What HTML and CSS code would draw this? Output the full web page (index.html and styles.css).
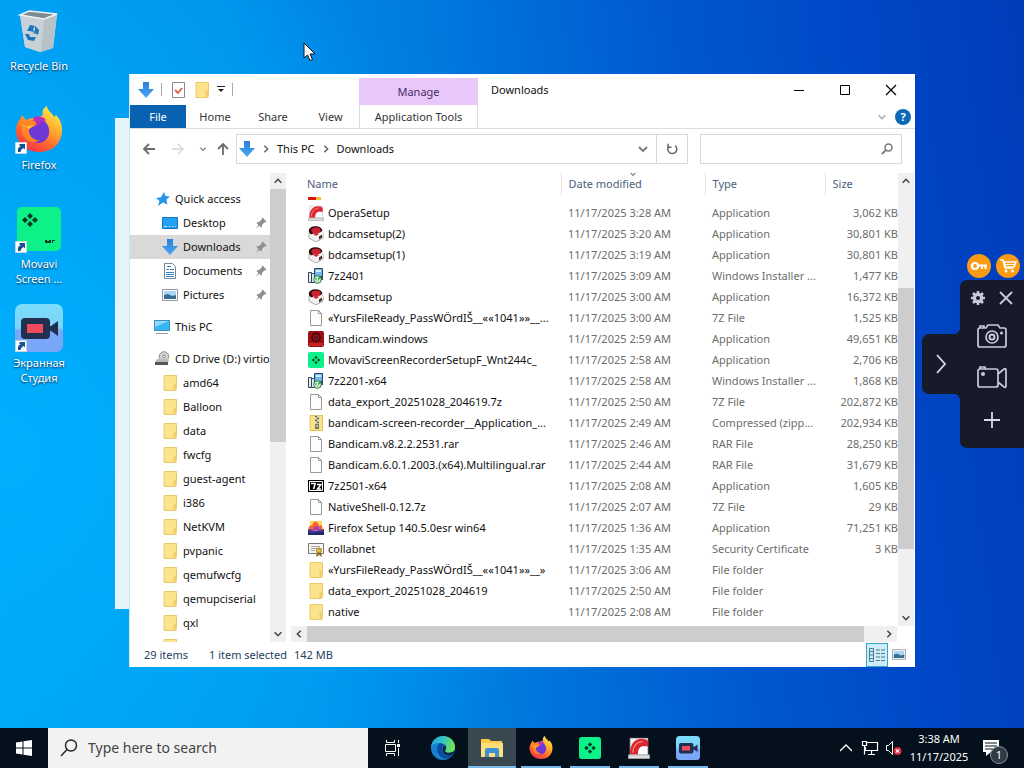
FILE: index.html
```html
<!DOCTYPE html>
<html lang="en">
<head>
<meta charset="utf-8">
<title>Downloads</title>
<link rel="stylesheet" href="styles.css">
</head>
<body>
<svg class="sprite" aria-hidden="true">
  <defs>
    <linearGradient id="gFlame" x1="0.8" y1="0" x2="0.2" y2="1"><stop offset="0" stop-color="#fff04a"/><stop offset=".35" stop-color="#ffb02e"/><stop offset=".65" stop-color="#ff6a2e"/><stop offset="1" stop-color="#f5294e"/></linearGradient>
    <linearGradient id="gSky" x1="0" y1="0" x2="0" y2="1"><stop offset="0" stop-color="#7cdcfc"/><stop offset=".5" stop-color="#7cd4fa"/><stop offset=".55" stop-color="#78a8fa"/><stop offset="1" stop-color="#7ba6f8"/></linearGradient>
    <linearGradient id="gEdge" x1="0" y1="0" x2="1" y2="0.2"><stop offset="0" stop-color="#1f9de0"/><stop offset=".5" stop-color="#35c1c8"/><stop offset="1" stop-color="#6fe35a"/></linearGradient>
    <linearGradient id="gDown" x1="0" y1="0" x2="0" y2="1"><stop offset="0" stop-color="#2a80d4"/><stop offset="1" stop-color="#49a8f4"/></linearGradient>
  </defs>
  <symbol id="down" viewBox="0 0 16 16"><path d="M5 0h6v7h5l-8 9-8-9h5z" fill="url(#gDown)"/></symbol>
  <symbol id="folder" viewBox="0 0 16 16"><path d="M2 0.500h12.500v11l-1 4H2z" fill="#fce48d" stroke="#ecc965"/><path d="M11.500 8.500h3v7h-3z" fill="#f3cf69"/></symbol>
  <symbol id="file" viewBox="0 0 16 16"><path d="M2.500.5h8l3 3v12h-11z" fill="#fdfdfd" stroke="#9a9a9a"/><path d="M10.500.5v3h3" fill="none" stroke="#9a9a9a"/></symbol>
  <symbol id="zip" viewBox="0 0 16 16"><path d="M2 0.500h12.500v15H2z" fill="#fbe08a" stroke="#e6c25c"/><path d="M7 0h4v11H7z" fill="#d9d5b5"/><path d="M7 1.500h2m0 2h2m-4 2h2m0 2h2" stroke="#5b6660" stroke-width="1.300"/><rect x="7" y="9" width="4" height="5" fill="#777c62"/><path d="M8.500 10h1v2h-1z" fill="#fff"/></symbol>
  <symbol id="msi" viewBox="0 0 16 16"><path d="M6.500.5h8v8h-8z" fill="#6fb7ee" stroke="#2c4260"/><path d="M8 2h5v2H8z" fill="#d5edfb"/><path d="M.5 4.500h3v10h-3zM3.500 5.500h3v9h-3z" fill="#e3eaf2" stroke="#34455c"/><path d="M15 1v11h-3V9h2z" fill="#324a6c"/><circle cx="9.500" cy="11.500" r="3.800" fill="#c9efcd" stroke="#287a3c"/><path d="M7.500 10.500l2 2 3-4" fill="none" stroke="#24a23d" stroke-width="1.400"/><circle cx="9.500" cy="11.800" r="1" fill="#fff"/></symbol>
  <symbol id="bdsetup" viewBox="0 0 16 16"><path d="M1 7l7-2 7 2v5l-7 4-7-4z" fill="#f1f1f1" stroke="#a9a9a9"/><ellipse cx="7.500" cy="4.800" rx="6.800" ry="4.600" fill="#2b0b0d"/><ellipse cx="8" cy="4.500" rx="4.600" ry="3" fill="#cf2230"/><path d="M6 7c3 1 6 0 8-2l1 4-6 3-6-3z" fill="#f8f8f8"/><path d="M5 8l3-2 3 2-3 2z" fill="#d92634"/><path d="M11 10.500l3-2v3l-3 2z" fill="#4d2a2a"/></symbol>
  <symbol id="bandicam" viewBox="0 0 16 16"><rect width="16" height="16" rx="2" fill="#9c1015"/><rect x="1" y="12" width="14" height="3" fill="#c92020"/><circle cx="8" cy="6.500" r="4" fill="#9a161b" stroke="#3c0507" stroke-width="1.500"/><circle cx="8" cy="6.500" r="1.500" fill="none" stroke="#40070a"/></symbol>
  <symbol id="movavi" viewBox="0 0 16 16"><rect width="16" height="16" rx="2" fill="#0df288"/><path d="M8 3.800l1.600 1.600L8 7 6.400 5.400zM5.400 6.400L7 8 5.400 9.600 3.800 8zM10.600 6.400L12.200 8l-1.600 1.600L9 8zM8 9l1.600 1.600L8 12.200l-1.600-1.600z" fill="#073b27"/></symbol>
  <symbol id="sevenzip" viewBox="0 0 16 16"><path d="M0 2h16v12H0z"/><path d="M1.500 3.500h13v9h-13z" fill="none" stroke="#fff"/><path d="M3 5.500h4v1L5.500 11M9 6.500h4L9.500 11H13" fill="none" stroke="#fff" stroke-width="1.500"/></symbol>
  <symbol id="ffsetup" viewBox="0 0 16 16"><path d="M2 1h12v9H2z" fill="#ffd95c"/><path d="M1 10c-1-3 1-4 2-5l1 1c0-2 2-4 4-5 1 2 3 2 3 5l2-1c2 2 2 4 1 6z" fill="#f7652f"/><path d="M5 10c0-3 2-4 4-4s3 2 2 5z" fill="#a63dbb"/><path d="M0 9l4 1 4 1 4-1 4-1v6H0z" fill="#4a3590"/><path d="M0 12l5 1 6-1 5 0v3H0z" fill="#22266a"/></symbol>
  <symbol id="cert" viewBox="0 0 16 16"><path d="M.5 2.500h15v10H.5z" fill="#f6f6ee" stroke="#777"/><path d="M3 5.500h9M3 7.500h6M3 9.500h4" stroke="#aaa"/><path d="M9 11l-1 5 3-2 3 2-1-5" fill="#8b6e22"/><circle cx="11" cy="9.500" r="2.500" fill="#e5b948" stroke="#a37c21"/></symbol>
  <symbol id="opera" viewBox="0 0 24 24"><path d="M2.500 1.500h19v18h-19z" fill="#f7f7f7" stroke="#c9c9c9"/><path d="M2 19C2 8 7 2 15 2c4 0 6 1 7 3v5h-4c-5 0-7 3-7 9z" fill="#dd2630"/><path d="M11 19c0-6 2-9 6-9 3 0 4 2 4 5v4z" fill="#fff"/><path d="M5 17C6 9 9 5 16 5" fill="none" stroke="#f58a8a" stroke-width="1.300"/><path d="M.5 19.500h23v4H.5z" fill="#dedede" stroke="#a4a4a4"/></symbol>
  <symbol id="firefox" viewBox="0 0 48 48"><path d="M24 46C10 46 1 36 1 24c0-5 2-9 5-12l1-3 4 5 6-2 7-1 4-2c-1-4 0-7 4-9 0 5 5 6 7 11l2-2c5 5 6 10 6 15 0 13-9 22-23 22z" fill="url(#gFlame)"/><path d="M13 17c6-5 15-5 19 1 5 8 1 18-8 19-8 0-14-7-11-20z" fill="#6e37d8"/><path d="M18 12c5-3 12-1 13 3-6-1-5 4-10 5z" fill="#b82fbd"/><path d="M5 12c2 3 7 2 11 2 4 0 6 3 5 5l-7 4c-1 7 5 12 11 11-7 5-17 0-18-9z" fill="#ff8624"/><path d="M4 17l5 4 10-2-5 4z" fill="#ffc43c"/></symbol>
  <symbol id="studio" viewBox="0 0 48 48"><rect width="48" height="48" rx="7" fill="url(#gSky)"/><rect x="6" y="14" width="29" height="21" rx="4" fill="#22304f"/><path d="M33 22h3l7-5v15l-7-5h-3z" fill="#22304f"/><path d="M12 20h16v9H12z" fill="#f04c5d"/></symbol>
  <symbol id="shortcut" viewBox="0 0 12 12"><path d="M.5.5h11v11H.5z" fill="#fff" stroke="#c5d6e2"/><path d="M3 10V7q0-2 3-3H4.500V2H10v5.500L8.500 6Q6 7 5.500 10z" fill="#17548f"/></symbol>
  <symbol id="pin" viewBox="0 0 12 12"><path d="M7.500.5l4 4-1 1-1-.2L7 8l-.3 2L6 10.500 1.500 6l.7-.7L4 5l2.700-2.500-.2-1zM3.500 7.500l1 1L1 11.500z" fill="#8b9095"/></symbol>
  <symbol id="left" viewBox="0 0 12 12"><path d="M8 2L4 6l4 4" fill="none" stroke="currentColor" stroke-width="1.800"/></symbol>
  <symbol id="right" viewBox="0 0 12 12"><path d="M4 2l4 4-4 4" fill="none" stroke="currentColor" stroke-width="1.800"/></symbol>
  <symbol id="up" viewBox="0 0 12 12"><path d="M2 8l4-4 4 4" fill="none" stroke="currentColor" stroke-width="1.800"/></symbol>
  <symbol id="dn" viewBox="0 0 12 12"><path d="M2 4l4 4 4-4" fill="none" stroke="currentColor" stroke-width="1.800"/></symbol>
  <symbol id="picture" viewBox="0 0 16 12"><path d="M.5.5h15v11H.5z" fill="#fff" stroke="#919aa3"/><path d="M2 2h12v8H2z" fill="#a8d5f5"/><path d="M2 6l4-1 4 2 4-1v4H2z" fill="#376d8f"/></symbol>
</svg>

<main class="desktop">
  <nav class="shortcuts" aria-label="Desktop icons">
    <a class="shortcut" href="#"><span class="shortcut-icon"><svg width="48" height="48" viewBox="0 0 48 48"><path d="M5 8l9-4 28 3-4 34-13 4-15-5z" fill="#d7dde1"/><path d="M5 8l24 4-3 33-16-5z" fill="#c9d1d6"/><path d="M29 12l13-5-4 34-12 4z" fill="#b6c1c8"/><path d="M5 8l9-4 28 3-13 5z" fill="#7d8c93" stroke="#edf2f4" stroke-width="1.500"/><path d="M12 24l3-6 5 1-2 3 1 3-4-1zM20 19l4 4-1 5-3-2-2 1 2-4zM10 27l4 0 1 3 6 0-2 4-6-1z" fill="#1777bd"/></svg></span><span>Recycle Bin</span></a>
    <a class="shortcut" href="#"><span class="shortcut-icon"><svg width="48" height="48"><use href="#firefox"/></svg><svg class="badge" width="12" height="12"><use href="#shortcut"/></svg></span><span>Firefox</span></a>
    <a class="shortcut" href="#"><span class="shortcut-icon"><svg width="48" height="48" viewBox="0 0 48 48"><rect x="2" y="2" width="44" height="44" rx="5" fill="#0df288"/><path d="M15 8l3 3-3 3-3-3zM10 12l3 3-3 3-3-3zM20 12l3 3-3 3-3-3zM15 16l3 3-3 3-3-3z" fill="#073b27"/><path d="M30 35h2v3h-2zM32 36h2v2h-2zM34 35h2v3h-2zM37 35h1v3h-1zM38 35h2v1h-2z" fill="#073b27"/></svg><svg class="badge" width="12" height="12"><use href="#shortcut"/></svg></span><span>Movavi<br>Screen ...</span></a>
    <a class="shortcut" href="#"><span class="shortcut-icon"><svg width="48" height="48"><use href="#studio"/></svg><svg class="badge" width="12" height="12"><use href="#shortcut"/></svg></span><span>Экранная<br>Студия</span></a>
  </nav>

  <div class="back-window"></div>

  <section class="window" aria-label="Downloads">
    <header class="titlebar">
      <div class="quick">
        <svg width="16" height="16"><use href="#down"/></svg><i class="bar"></i>
        <svg width="18" height="16" viewBox="0 0 18 16"><path d="M3.500.5h12v15h-12z" fill="#fff" stroke="#8b8b8b"/><path d="M6 8l3 3 4-5" fill="none" stroke="#df5a43" stroke-width="1.800"/></svg>
        <svg width="16" height="16"><use href="#folder"/></svg>
        <svg width="8" height="8" viewBox="0 0 8 8"><path d="M0 .5h8" stroke="#222"/><path d="M1 3h6L4 6z" fill="#222"/></svg><i class="bar"></i>
      </div>
      <button class="manage">Manage</button>
      <h1 class="title">Downloads</h1>
      <div class="controls">
        <button aria-label="Minimize"><svg width="12" height="12"><path d="M1 6.500h10" stroke="#000"/></svg></button>
        <button aria-label="Maximize"><svg width="12" height="12"><path d="M1.500 1.500h9v9h-9z" fill="none" stroke="#000"/></svg></button>
        <button aria-label="Close"><svg width="12" height="12"><path d="M1 1l10 10M11 1L1 11" stroke="#000" stroke-width="1.200"/></svg></button>
      </div>
    </header>
    <div class="ribbon">
      <button class="file-tab">File</button><button class="tab">Home</button><button class="tab">Share</button><button class="tab last">View</button><button class="tools-tab">Application Tools</button>
      <div class="ribbon-end"><svg width="10" height="10" color="#aaa"><use href="#dn"/></svg><button class="help" aria-label="Help">?</button></div>
    </div>
    <div class="address-row">
      <div class="history">
        <button aria-label="Back"><svg width="14" height="14" viewBox="0 0 14 14"><path d="M13 7H2M7 2L2 7l5 5" fill="none" stroke="#6b6b6b" stroke-width="1.800"/></svg></button>
        <button aria-label="Forward"><svg width="14" height="14" viewBox="0 0 14 14"><path d="M1 7h11M7 2l5 5-5 5" fill="none" stroke="#d4d4d4" stroke-width="1.300"/></svg></button>
        <button class="narrow" aria-label="Recent"><svg width="8" height="8" color="#777"><use href="#dn"/></svg></button>
        <button class="upward" aria-label="Up"><svg width="14" height="14" viewBox="0 0 14 14"><path d="M7 13V2M2 7l5-5 5 5" fill="none" stroke="#6b6b6b" stroke-width="1.800"/></svg></button>
      </div>
      <div class="path">
        <svg width="16" height="16"><use href="#down"/></svg><svg width="10" height="10" color="#666"><use href="#right"/></svg><a href="#">This PC</a><svg width="10" height="10" color="#666"><use href="#right"/></svg><a href="#">Downloads</a>
        <button class="path-drop" aria-label="Previous locations"><svg width="12" height="12" color="#777"><use href="#dn"/></svg></button>
        <button class="refresh" aria-label="Refresh"><svg width="12" height="12" viewBox="0 0 12 12"><path d="M9 2.500A4.500 4.500 0 1 1 3 3M2 .8v3.400h3.500" fill="none" stroke="#666" stroke-width="1.500"/></svg></button>
      </div>
      <div class="search"><input type="text" aria-label="Search Downloads"><svg width="12" height="12" viewBox="0 0 12 12"><circle cx="7.500" cy="4.500" r="3.500" fill="none" stroke="#777" stroke-width="1.500"/><path d="M5 7L.8 11.200" stroke="#777" stroke-width="1.800"/></svg></div>
    </div>

    <div class="body">
      <nav class="tree" aria-label="Folders">
        <ul class="places">
          <li class="top"><svg width="14" height="14" viewBox="0 0 14 14"><path d="M8 0l1.500 4 4.500.5-3.500 3 .8 5L7 10.500 2 14l1.500-5L0 6l5-.7z" fill="#2795e6"/></svg><a href="#">Quick access</a></li>
          <li><svg width="16" height="16" viewBox="0 0 16 16"><path d="M.5 2.500h15v11H.5z" fill="#23a1f3" stroke="#1376c5"/><path d="M2 11.500h3M7 11.500h1M10 11.500h1M13 11.500h1" stroke="#bfe3fb"/></svg><a href="#">Desktop</a><svg class="pin" width="12" height="12"><use href="#pin"/></svg></li>
          <li class="current"><svg width="16" height="16"><use href="#down"/></svg><a href="#">Downloads</a><svg class="pin" width="12" height="12"><use href="#pin"/></svg></li>
          <li><svg width="16" height="16" viewBox="0 0 16 16"><path d="M2.500.5h8l3 3v12h-11z" fill="#fff" stroke="#71899c"/><path d="M5 3.500h4M8 6.500h4M4 9.500h8M4 11.500h8M4 13.500h8M4 6.500h3" stroke="#3b83bc"/></svg><a href="#">Documents</a><svg class="pin" width="12" height="12"><use href="#pin"/></svg></li>
          <li><svg width="16" height="12"><use href="#picture"/></svg><a href="#">Pictures</a><svg class="pin" width="12" height="12"><use href="#pin"/></svg></li>
        </ul>
        <ul><li class="top pc"><svg width="16" height="16" viewBox="0 0 16 16"><path d="M.5 1.500h15v10H.5z" fill="#38b5f4" stroke="#3e8dbb"/><path d="M1 2h14L1 8z" fill="#8ed9ff"/><path d="M2 14.500h12" stroke="#899ba7"/></svg><a href="#">This PC</a></li></ul>
        <ul class="drive">
          <li class="top pc"><svg width="16" height="16" viewBox="0 0 16 16"><circle cx="10" cy="5.500" r="4.800" fill="#d2d2d2" stroke="#929292"/><circle cx="10" cy="5.500" r="1.300" fill="#fff" stroke="#888"/><path d="M3 8h11l1 3H1z" fill="#bbb"/><path d="M1 11h13v3H1z" fill="#555"/></svg><a href="#">CD Drive (D:) virtio</a></li>
          <li><svg width="16" height="16"><use href="#folder"/></svg><a href="#">amd64</a></li>
          <li><svg width="16" height="16"><use href="#folder"/></svg><a href="#">Balloon</a></li>
          <li><svg width="16" height="16"><use href="#folder"/></svg><a href="#">data</a></li>
          <li><svg width="16" height="16"><use href="#folder"/></svg><a href="#">fwcfg</a></li>
          <li><svg width="16" height="16"><use href="#folder"/></svg><a href="#">guest-agent</a></li>
          <li><svg width="16" height="16"><use href="#folder"/></svg><a href="#">i386</a></li>
          <li><svg width="16" height="16"><use href="#folder"/></svg><a href="#">NetKVM</a></li>
          <li><svg width="16" height="16"><use href="#folder"/></svg><a href="#">pvpanic</a></li>
          <li><svg width="16" height="16"><use href="#folder"/></svg><a href="#">qemufwcfg</a></li>
          <li><svg width="16" height="16"><use href="#folder"/></svg><a href="#">qemupciserial</a></li>
          <li><svg width="16" height="16"><use href="#folder"/></svg><a href="#">qxl</a></li>
          <li><svg width="16" height="16"><use href="#folder"/></svg><a href="#">qxldod</a></li>
        </ul>
      </nav>
      <div class="vscroll tree-scroll"><button aria-label="Scroll up"><svg width="10" height="10"><use href="#up"/></svg></button><div class="track"><div class="thumb"></div></div><button aria-label="Scroll down"><svg width="10" height="10"><use href="#dn"/></svg></button></div>

      <div class="listing">
        <div class="list-main">
          <div class="list">
            <table>
              <colgroup><col><col class="c-date"><col class="c-type"><col class="c-size"></colgroup>
              <thead><tr><th>Name</th><th class="sorted">Date modified<svg width="8" height="8" color="#888"><use href="#dn"/></svg></th><th>Type</th><th>Size</th></tr></thead>
              <tbody>
              <tr class="peek"><td><span class="sliver"></span></td><td></td><td></td><td></td></tr>
              <tr><td><svg><use href="#opera"/></svg>OperaSetup</td><td>11/17/2025 3:28 AM</td><td>Application</td><td>3,062 KB</td></tr>
              <tr><td><svg><use href="#bdsetup"/></svg>bdcamsetup(2)</td><td>11/17/2025 3:20 AM</td><td>Application</td><td>30,801 KB</td></tr>
              <tr><td><svg><use href="#bdsetup"/></svg>bdcamsetup(1)</td><td>11/17/2025 3:19 AM</td><td>Application</td><td>30,801 KB</td></tr>
              <tr><td><svg><use href="#msi"/></svg>7z2401</td><td>11/17/2025 3:09 AM</td><td>Windows Installer ...</td><td>1,477 KB</td></tr>
              <tr><td><svg><use href="#bdsetup"/></svg>bdcamsetup</td><td>11/17/2025 3:00 AM</td><td>Application</td><td>16,372 KB</td></tr>
              <tr><td><svg><use href="#file"/></svg>«YursFileReady_PassWÖrdIŠ__««1041»»__...</td><td>11/17/2025 3:00 AM</td><td>7Z File</td><td>1,525 KB</td></tr>
              <tr><td><svg><use href="#bandicam"/></svg>Bandicam.windows</td><td>11/17/2025 2:59 AM</td><td>Application</td><td>49,651 KB</td></tr>
              <tr><td><svg><use href="#movavi"/></svg>MovaviScreenRecorderSetupF_Wnt244c_</td><td>11/17/2025 2:58 AM</td><td>Application</td><td>2,706 KB</td></tr>
              <tr><td><svg><use href="#msi"/></svg>7z2201-x64</td><td>11/17/2025 2:58 AM</td><td>Windows Installer ...</td><td>1,868 KB</td></tr>
              <tr><td><svg><use href="#file"/></svg>data_export_20251028_204619.7z</td><td>11/17/2025 2:50 AM</td><td>7Z File</td><td>202,872 KB</td></tr>
              <tr><td><svg><use href="#zip"/></svg>bandicam-screen-recorder__Application_...</td><td>11/17/2025 2:49 AM</td><td>Compressed (zipp...</td><td>202,934 KB</td></tr>
              <tr><td><svg><use href="#file"/></svg>Bandicam.v8.2.2.2531.rar</td><td>11/17/2025 2:46 AM</td><td>RAR File</td><td>28,250 KB</td></tr>
              <tr><td><svg><use href="#file"/></svg>Bandicam.6.0.1.2003.(x64).Multilingual.rar</td><td>11/17/2025 2:44 AM</td><td>RAR File</td><td>31,679 KB</td></tr>
              <tr><td><svg><use href="#sevenzip"/></svg>7z2501-x64</td><td>11/17/2025 2:08 AM</td><td>Application</td><td>1,605 KB</td></tr>
              <tr><td><svg><use href="#file"/></svg>NativeShell-0.12.7z</td><td>11/17/2025 2:07 AM</td><td>7Z File</td><td>29 KB</td></tr>
              <tr><td><svg><use href="#ffsetup"/></svg>Firefox Setup 140.5.0esr win64</td><td>11/17/2025 1:36 AM</td><td>Application</td><td>71,251 KB</td></tr>
              <tr><td><svg><use href="#cert"/></svg>collabnet</td><td>11/17/2025 1:35 AM</td><td>Security Certificate</td><td>3 KB</td></tr>
              <tr><td><svg><use href="#folder"/></svg>«YursFileReady_PassWÖrdIŠ__««1041»»__»</td><td>11/17/2025 3:06 AM</td><td>File folder</td><td></td></tr>
              <tr><td><svg><use href="#folder"/></svg>data_export_20251028_204619</td><td>11/17/2025 2:50 AM</td><td>File folder</td><td></td></tr>
              <tr><td><svg><use href="#folder"/></svg>native</td><td>11/17/2025 2:08 AM</td><td>File folder</td><td></td></tr>
              </tbody>
            </table>
          </div>
          <div class="vscroll list-scroll"><button aria-label="Scroll up"><svg width="10" height="10"><use href="#up"/></svg></button><div class="track"><div class="thumb"></div></div><button aria-label="Scroll down"><svg width="10" height="10"><use href="#dn"/></svg></button></div>
        </div>
        <div class="hscroll"><button aria-label="Scroll left"><svg width="10" height="10"><use href="#left"/></svg></button><div class="track"><div class="thumb"></div></div><button aria-label="Scroll right"><svg width="10" height="10"><use href="#right"/></svg></button></div>
      </div>
    </div>

    <footer class="status"><span class="count">29 items</span><span class="selected">1 item selected</span><span>142 MB</span>
      <div class="views">
        <button class="active" aria-label="Details view"><svg width="20" height="16" viewBox="0 0 20 16"><path d="M2.500 1.500h4v13h-4zM2 4.500h5M2 8h5M2 11.500h5M9 3h4m1 0h4M9 6.500h4m1 0h4M9 10h4m1 0h4M9 13.500h4m1 0h4" fill="none" stroke="#4b7f91"/></svg></button>
        <button aria-label="Large icons view"><svg width="14" height="11"><use href="#picture"/></svg></button>
      </div>
    </footer>
  </section>

  <aside class="recorder" aria-label="Screen recorder">
    <div class="offers">
      <button aria-label="License"><svg width="18" height="12" viewBox="0 0 18 12"><circle cx="5" cy="6" r="3" fill="none" stroke="#fff" stroke-width="2.200"/><path d="M8 5.500h9M12 5v4M15.500 5v4" fill="none" stroke="#fff" stroke-width="2"/></svg></button>
      <button aria-label="Buy"><svg width="18" height="16" viewBox="0 0 18 16"><path d="M1 2h3l2 8h8" fill="none" stroke="#fff" stroke-width="1.600"/><path d="M5 4h12l-2 5H6z" fill="none" stroke="#fff" stroke-width="1.500"/><path d="M6 6.500h10" stroke="#fff"/><circle cx="7" cy="13" r="1.500" fill="#fff"/><circle cx="13.500" cy="13" r="1.500" fill="#fff"/></svg></button>
    </div>
    <div class="recorder-row">
      <button class="expand" aria-label="Collapse"><svg width="12" height="20" viewBox="0 0 12 20"><path d="M2 1l8 9-8 9" fill="none" stroke="#d6dae8" stroke-width="1.800"/></svg></button>
      <div class="panel">
        <div class="panel-top">
          <button aria-label="Settings"><svg width="14" height="14" viewBox="0 0 14 14"><circle cx="7" cy="7" r="3.600" fill="none" stroke="#c8ccda" stroke-width="3.200"/><path d="M7 0v3M7 11v3M0 7h3M11 7h3M2 2l2 2M10 10l2 2M12 2l-2 2M4 10l-2 2" stroke="#c8ccda" stroke-width="2.600"/></svg></button>
          <button aria-label="Close recorder"><svg width="14" height="14"><path d="M1 1l12 12M13 1L1 13" stroke="#c8ccda" stroke-width="1.800"/></svg></button>
        </div>
        <button aria-label="Capture screenshot"><svg width="30" height="24" viewBox="0 0 30 24"><path d="M3 4h6l2-3h10l2 3h4q2 0 2 2v15q0 2-2 2H3q-2 0-2-2V6q0-2 2-2zM3 4V2h4v2" fill="none" stroke="#c8ccda" stroke-width="1.700"/><circle cx="15" cy="13" r="6" fill="none" stroke="#c8ccda" stroke-width="1.700"/><circle cx="15" cy="13" r="2.500" fill="none" stroke="#c8ccda" stroke-width="2"/><circle cx="24.500" cy="9" r="1.500" fill="#c8ccda"/></svg></button>
        <button aria-label="Record video"><svg width="30" height="24" viewBox="0 0 30 24"><path d="M3 4h16q2 0 2 2v14q0 2-2 2H3q-2 0-2-2V6q0-2 2-2zM3 4V2h5v2M21 9l6-5q2-1 2 1v16q0 2-2 1l-6-5" fill="none" stroke="#c8ccda" stroke-width="1.700"/><circle cx="6" cy="9" r="2" fill="#c8ccda"/></svg></button>
        <button aria-label="Add"><svg width="16" height="16"><path d="M8 0v16M0 8h16" stroke="#d6dae8" stroke-width="1.800"/></svg></button>
      </div>
    </div>
  </aside>

  <svg class="pointer" width="13" height="20" viewBox="0 0 13 20"><path d="M1 1v15l3.500-3 2.500 5.500 2.500-1L7 12h5z" fill="#fff" stroke="#111"/></svg>
</main>

<footer class="taskbar">
  <button class="start" aria-label="Start"><svg width="16" height="16" viewBox="0 0 16 16"><path d="M0 2.500L6.500 1.500v6H0zM7.500 1.300L16 0v7.500H7.500zM0 8.500h6.500v6L0 13.500zM7.500 8.500H16V16l-8.500-1.300z" fill="#fff"/></svg></button>
  <label class="taskbar-search"><svg width="18" height="18" viewBox="0 0 18 18"><circle cx="11" cy="6.500" r="5.500" fill="none" stroke="#222" stroke-width="1.400"/><path d="M7 10.500L1 17" stroke="#222" stroke-width="1.400"/></svg><input type="text" placeholder="Type here to search" aria-label="Type here to search"></label>
  <div class="apps">
    <button class="app idle" aria-label="Task view"><svg width="16" height="16" viewBox="0 0 16 16"><path d="M.5 4.500h10v7H.5zM1.500 0v2.500h8V0M1.500 16v-2.500h8V16M13.500 0v3M13.500 8v8" fill="none" stroke="#fff"/><path d="M12 4h3v3h-3z" fill="#fff"/></svg></button>
    <button class="app idle" aria-label="Edge"><svg width="24" height="24" viewBox="0 0 24 24"><circle cx="12" cy="12" r="12" fill="#187fd1"/><path d="M0 11C1 4 6 0 12 0c7 0 12 5 12 11 0 4-3 6-7 6-3 0-4-1-3-3 2-4-1-7-5-7-5 0-8 2-9 4z" fill="url(#gEdge)"/><path d="M9 7c-4 3-4 10 1 14 4 3 9 2 12-3-5 3-11 1-11-5 0-2 1-4 3-4z" fill="#0a4d9b"/><path d="M14 9c-3 2-4 7 1 10 3 1 6 0 7-1l2-4c-2 3-9 4-10 1 2-3 1-5 0-6z" fill="#09244a"/></svg></button>
    <button class="app active" aria-label="File Explorer"><svg width="24" height="24" viewBox="0 0 24 24"><path d="M1 3h8l2 2h11v16H1z" fill="#ffc842"/><path d="M1 7h22v14H1z" fill="#ffdf7c"/><path d="M5 21v-7q0-2 2-2h10q2 0 2 2v7h-4v-4H9v4z" fill="#3c91d3"/></svg></button>
    <button class="app" aria-label="Firefox"><svg width="24" height="24"><use href="#firefox"/></svg></button>
    <button class="app" aria-label="Movavi Screen Recorder"><svg width="22" height="22"><use href="#movavi"/></svg></button>
    <button class="app" aria-label="Opera Setup"><svg width="22" height="22"><use href="#opera"/></svg></button>
    <button class="app" aria-label="Экранная Студия"><svg width="24" height="24"><use href="#studio"/></svg></button>
  </div>
  <div class="tray">
    <button aria-label="Hidden icons"><svg width="12" height="12" viewBox="0 0 12 12"><path d="M0 9l6-6 6 6" fill="none" stroke="#fff" stroke-width="1.300"/></svg></button>
    <button class="network" aria-label="Network"><svg width="18" height="16" viewBox="0 0 18 16"><path d="M5 2.500h11.500v8H4.500V7M1.500 1.500h4v4h-4zM3.500 5.500v9M10.500 10.500v4M7 14.500h7" fill="none" stroke="#fff" stroke-width="1.200"/></svg></button>
    <button aria-label="Sound muted"><svg width="18" height="16" viewBox="0 0 18 16"><path d="M1.500 5.500h2l4-4v13l-4-4h-2z" fill="none" stroke="#fff"/><circle cx="12.500" cy="11" r="4" fill="#dc2538"/><path d="M10.800 9.300l3.400 3.400m0-3.400l-3.400 3.400" stroke="#fff" stroke-width="1.200"/></svg></button>
    <div class="clock"><span>3:38 AM</span><span>11/17/2025</span></div>
    <button class="notice" aria-label="1 notification"><svg width="18" height="18" viewBox="0 0 18 18"><path d="M1 1h16v12H9l-5 4v-4H1z" fill="#fff"/><path d="M3 4h12M3 7h12M3 10h8" stroke="#07121b"/></svg><span class="notice-count">1</span></button>
  </div>
</footer>
</body>
</html>
```
FILE: styles.css
```css
* { box-sizing: border-box; }
body {
  margin: 0;
  height: 100vh;
  display: flex;
  flex-direction: column;
  overflow: hidden;
  font: 12px/16px "Noto Sans", "Open Sans", sans-serif;
  color: #111;
}
button { font: inherit; color: inherit; border: 0; padding: 0; background: none; display: flex; align-items: center; justify-content: center; }
a { color: inherit; text-decoration: none; }
ul { list-style: none; margin: 0; padding: 0; }
svg { flex: none; display: block; }
.sprite { position: absolute; width: 0; height: 0; }

/* Desktop */
.desktop {
  flex: 1;
  position: relative;
  min-height: 0;
  background: radial-gradient(ellipse 55% 75% at 0% 62%, #00afff 0%, rgba(0, 175, 255, 0) 100%), linear-gradient(83deg, #00a2f3 0%, #0094ec 28%, #0074dc 50%, #0058d0 68%, #0046c6 85%, #003cba 100%);
}
.shortcuts { width: 78px; padding-top: 7px; }
.shortcut { display: flex; flex-direction: column; align-items: center; height: 99px; gap: 3px; color: #fff; font-size: 11px; line-height: 15px; text-align: center; text-shadow: 0 1px 2px #024; }
.shortcut-icon { position: relative; }
.badge { position: absolute; left: 0; bottom: 0; }
.back-window { position: absolute; left: 115px; top: 118px; width: 30px; bottom: 119px; background: #e4f3fa; }
.pointer { position: absolute; left: 303px; top: 42px; }

/* Explorer window */
.window {
  position: absolute;
  left: 129px; right: 109px; top: 74px; bottom: 61px;
  display: flex;
  flex-direction: column;
  background: #fff;
  border-left: 1px solid #cfe8f6;
  font-size: 11px;
}
.titlebar { display: flex; height: 31px; }
.quick { width: 229px; display: flex; align-items: center; gap: 7px; padding-left: 8px; }
.bar { width: 1px; height: 13px; background: #aaa; }
.manage { width: 119px; margin-top: 4px; background: #e8c8fb; color: #4b2c63; }
.title { margin: 0; padding-left: 13px; font: inherit; line-height: 32px; flex: 1; }
.controls { display: flex; padding-right: 1px; }
.controls button { width: 46px; }
.ribbon { display: flex; height: 24px; border-bottom: 1px solid #dcdcdc; color: #333; }
.file-tab { width: 56px; background: #0862b0; color: #fff; }
.tab { width: 58px; }
.tab.last { width: 57px; }
.tools-tab { width: 119px; border: solid #dcdcdc; border-width: 0 1px; }
.ribbon-end { margin-left: auto; display: flex; align-items: center; gap: 8px; padding-right: 4px; }
.help { width: 16px; height: 16px; border-radius: 8px; background: #0e68b5; color: #fff; font-weight: bold; }
.address-row { display: flex; height: 44px; padding: 5px 13px 9px 11px; }
.history { display: flex; align-items: center; width: 95px; }
.history button { width: 16px; margin-right: 13px; }
.history .narrow { width: 8px; margin-right: 8px; }
.history .upward { margin-right: 0; }
.path { flex: 1; display: flex; align-items: center; gap: 6px; border: 1px solid #d9d9d9; padding-left: 2px; }
.path-drop { margin-left: auto; width: 14px; }
.refresh { width: 31px; align-self: stretch; border-left: 1px solid #d9d9d9; }
.search { width: 202px; margin-left: 12px; display: flex; align-items: center; border: 1px solid #d9d9d9; padding-right: 8px; }
.search input { flex: 1; min-width: 0; border: 0; outline: 0; background: none; font: inherit; }

.body { flex: 1; min-height: 0; display: flex; overflow: hidden; }
.tree { width: 140px; overflow: hidden; padding-top: 14px; }
.tree ul { margin-bottom: 8px; }
.tree li { display: flex; align-items: center; height: 24px; padding-left: 32px; gap: 5px; white-space: nowrap; }
.tree .top { padding-left: 26px; }
.tree .pc { padding-left: 24px; }
.tree .current { background: #d9d9d9; }
.pin { margin-left: auto; margin-right: 3px; }
.vscroll { display: flex; flex-direction: column; width: 16px; background: #f0f0f0; color: #444; }
.vscroll button { height: 16px; }
.track { flex: 1; display: flex; }
.vscroll .track { flex-direction: column; }
.thumb { background: #cdcdcd; }
.tree-scroll .thumb { height: 58%; }
.list-scroll .track { justify-content: flex-end; }
.list-scroll .thumb { height: 62%; margin-bottom: 61px; }
.listing { flex: 1; min-width: 0; display: flex; flex-direction: column; padding: 0 1px 0 5px; }
.list-main { flex: 1; min-height: 0; display: flex; }
.list { flex: 1; min-width: 0; overflow: hidden; }
.hscroll { display: flex; height: 16px; margin-right: 17px; background: #f0f0f0; color: #444; }
.hscroll button { width: 16px; }
.hscroll .thumb { width: 97%; }

table { width: 100%; table-layout: fixed; border-collapse: collapse; }
.c-date { width: 144px; }
.c-type { width: 120px; }
.c-size { width: 73px; }
th { height: 22px; padding: 0 7px; font-weight: normal; text-align: left; color: #4c607a; border-right: 1px solid #e0e0e0; position: relative; }
th:first-child { padding-left: 16px; }
th:last-child { border-right: 0; }
.sorted svg { position: absolute; left: 47%; top: -3px; }
td { height: 21px; padding: 0 0 0 7px; line-height: 16px; color: #6d6d6d; white-space: nowrap; }
td:first-child { padding-left: 17px; color: #111; }
td:last-child { text-align: right; padding: 0; }
td svg { width: 16px; height: 16px; display: inline-block; vertical-align: top; margin-right: 4px; }
.peek td { height: 7px; line-height: 1px; }
.sliver { display: block; width: 13px; height: 3px; background: linear-gradient(90deg, #d41313 60%, #f2c22c 60%); }

.status { display: flex; align-items: center; height: 25px; padding: 0 8px 0 14px; background: #fff; color: #25405f; }
.count { width: 65px; }
.selected { width: 85px; }
.views { margin-left: auto; display: flex; gap: 3px; height: 24px; }
.views button { width: 16px; }
.views .active { width: 22px; background: #cdebf8; border: 1px solid #37a5cf; }

/* Recorder panel */
.recorder { position: absolute; right: 0; top: 254px; }
.offers { display: flex; justify-content: flex-end; gap: 5px; padding: 0 4px 2px 0; }
.offers button { width: 24px; height: 24px; border-radius: 12px; background: #fb9a13; }
.recorder-row { display: flex; align-items: center; }
.expand { position: relative; width: 38px; height: 60px; background: #171b29; border-radius: 7px 0 0 7px; }
.expand::before, .expand::after { content: ""; position: absolute; right: 0; width: 6px; height: 6px; }
.expand::before { bottom: 100%; background: radial-gradient(circle at 0 0, transparent 6px, #171b29 6px); }
.expand::after { top: 100%; background: radial-gradient(circle at 0 100%, transparent 6px, #171b29 6px); }
.panel { width: 64px; padding: 11px 10px 20px; display: flex; flex-direction: column; align-items: center; gap: 17px; background: #171b29; border-radius: 7px 0 0 7px; }
.panel-top { display: flex; gap: 14px; padding-bottom: 2px; height: 16px; }
.panel > button:last-child { padding-top: 6px; }

/* Taskbar */
.taskbar { height: 40px; display: flex; background: #04101b; color: #fff; }
.start { width: 48px; }
.taskbar-search { width: 320px; display: flex; align-items: center; gap: 10px; padding-left: 12px; background: #f2f2f2; }
.taskbar-search input { flex: 1; min-width: 0; border: 0; outline: 0; background: none; font: 14px/20px "Noto Sans", "Open Sans", sans-serif; padding: 0; }
.taskbar-search input::placeholder { color: #444; opacity: 1; }
.apps { display: flex; gap: 1px; }
.app { width: 48px; position: relative; }
.app.idle { width: 49px; }
.app.active { background: #3a4852; }
.app:not(.idle)::after { content: ""; position: absolute; left: 4px; right: 4px; bottom: 0; height: 2px; background: #77b9e6; }
.app.active::after { left: 0; right: 0; }
.tray { margin-left: auto; display: flex; align-items: center; padding-right: 18px; gap: 6px; }
.network { margin-left: 3px; }
.clock { display: flex; flex-direction: column; align-items: center; width: 60px; font-size: 11px; line-height: 18px; }
.notice { position: relative; width: 30px; height: 40px; margin-left: 1px; }
.notice-count { position: absolute; right: -2px; bottom: 4px; width: 18px; height: 18px; border-radius: 9px; background: #303b43; border: 1px solid #87909a; font-size: 11px; line-height: 16px; }
```
